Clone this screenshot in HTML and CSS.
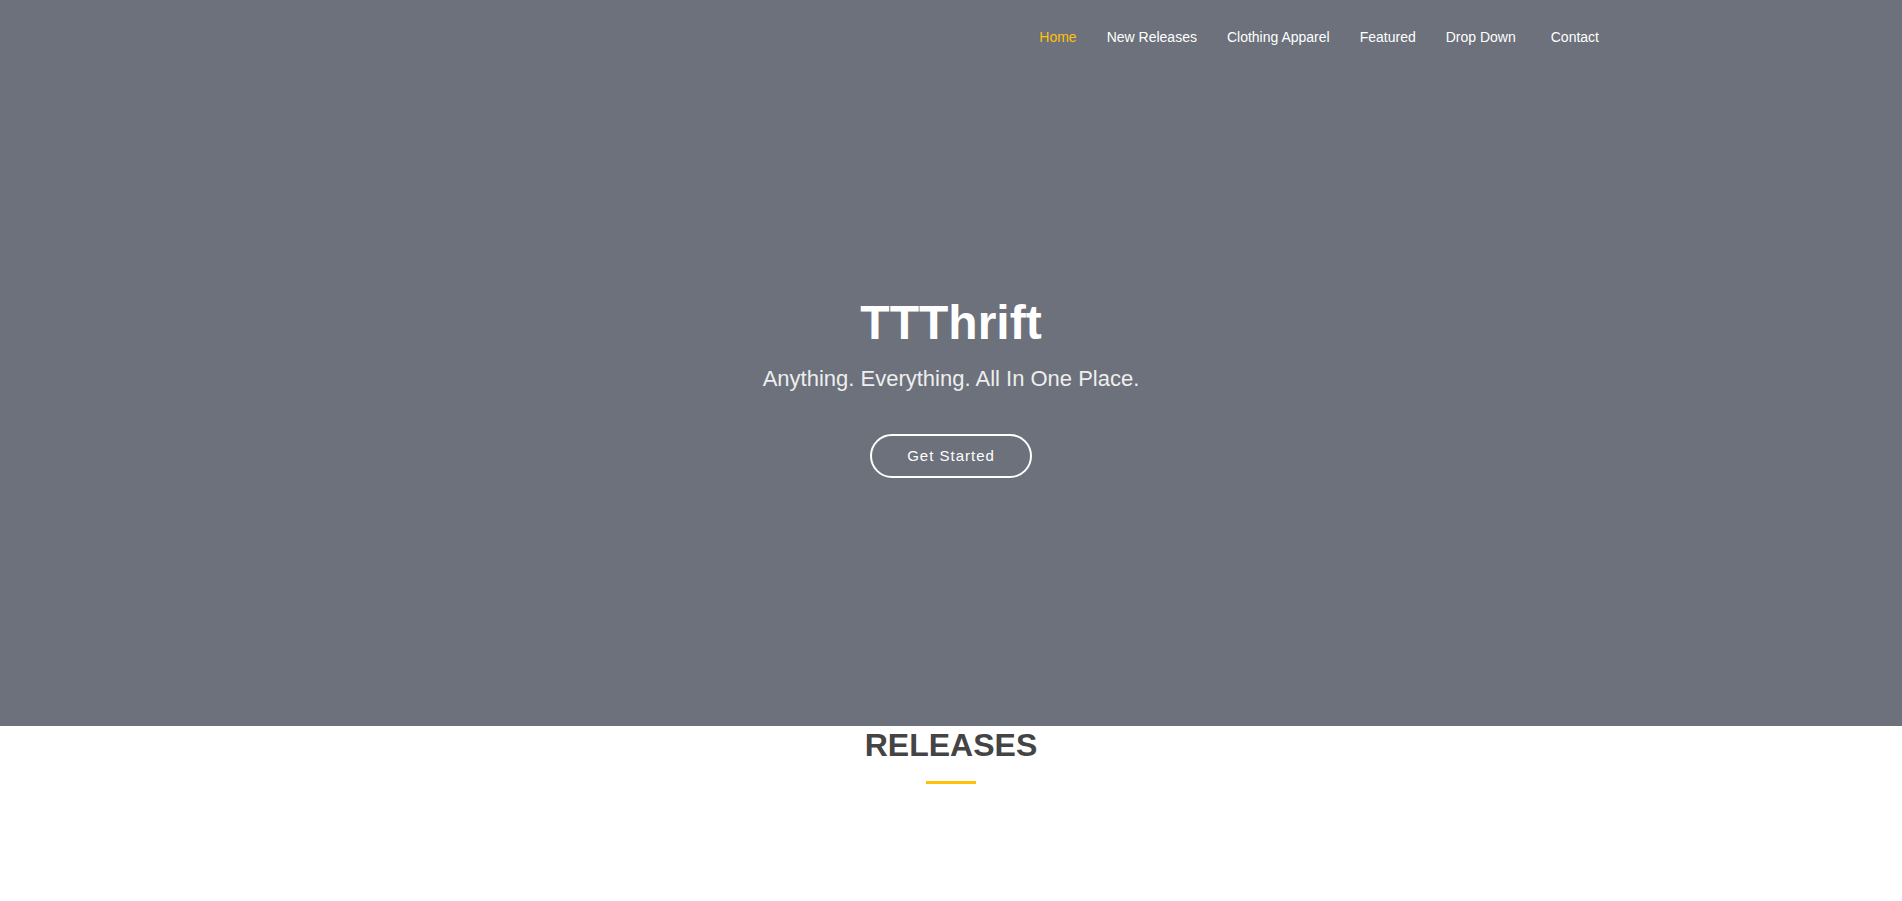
FILE: index.html
```html
<!DOCTYPE html>
<html lang="en">
<head>
<meta charset="utf-8">
<title>TTThrift</title>
<link rel="stylesheet" href="styles.css">
</head>
<body>
<section class="hero" id="home">
  <header class="header">
    <nav class="nav">
      <a class="nav-link active" href="#home">Home</a>
      <a class="nav-link" href="#releases">New Releases</a>
      <a class="nav-link" href="#apparel">Clothing Apparel</a>
      <a class="nav-link" href="#featured">Featured</a>
      <a class="nav-link drop" href="#more">Drop Down</a>
      <a class="nav-link" href="#contact">Contact</a>
    </nav>
  </header>
  <div class="hero-content">
    <h1 class="hero-title">TTThrift</h1>
    <p class="hero-text">Anything. Everything. All In One Place.</p>
    <a class="hero-button" href="#releases">Get Started</a>
  </div>
</section>
<main id="releases" class="releases">
  <h2 class="section-title">Releases</h2>
</main>
</body>
</html>
```
FILE: styles.css
```css
* { box-sizing: border-box; }
body {
  margin: 0;
  background: #fff;
  color: #444;
  font-family: "Liberation Sans", Arial, sans-serif;
}
a { text-decoration: none; }
.hero {
  min-height: 726px;
  display: flex;
  flex-direction: column;
  background: #6c717b;
  color: #fff;
}
.header {
  width: 100%;
  max-width: 1320px;
  margin: 0 auto;
  padding: 28px 12px 0;
}
.nav {
  display: flex;
  flex-wrap: wrap;
  justify-content: flex-end;
  gap: 30px;
}
.nav-link {
  color: #fff;
  font-size: 14px;
  line-height: 18px;
}
.nav-link.active { color: #ffc107; }
.nav-link.drop { padding-right: 5px; }
.hero-content {
  flex: 1;
  display: flex;
  flex-direction: column;
  align-items: center;
  justify-content: center;
  padding: 0 12px;
  text-align: center;
}
.hero-title {
  margin: 0 0 15px;
  font-size: 48px;
  line-height: 56px;
}
.hero-text {
  margin: 0 0 42px;
  color: #eee;
  font-size: 22px;
  line-height: 26px;
}
.hero-button {
  padding: 10px 35px;
  border: 2px solid #fff;
  border-radius: 50px;
  color: #fff;
  font-size: 15px;
  line-height: 20px;
  letter-spacing: 1px;
}
.section-title {
  margin: 0;
  display: flex;
  flex-direction: column;
  align-items: center;
  font-size: 32px;
  line-height: 38px;
  text-transform: uppercase;
}
.section-title::after {
  content: "";
  width: 50px;
  height: 3px;
  margin-top: 17px;
  background: #ffc107;
}
```
